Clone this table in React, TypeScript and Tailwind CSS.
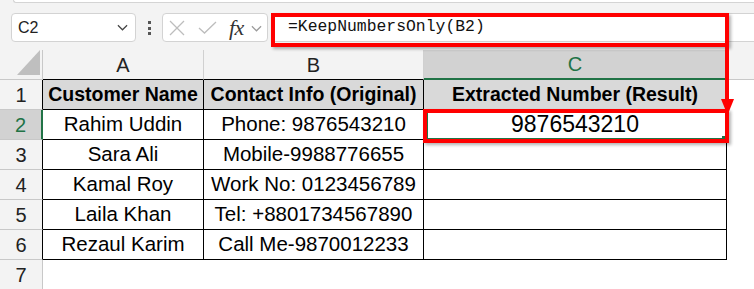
import React from "react";

const names = ["Rahim Uddin", "Sara Ali", "Kamal Roy", "Laila Khan", "Rezaul Karim"];
const contacts = [
  "Phone: 9876543210",
  "Mobile-9988776655",
  "Work No: 0123456789",
  "Tel: +8801734567890",
  "Call Me-9870012233",
];

function Chevron({ className }: { className?: string }) {
  return (
    <svg viewBox="0 0 12 7" className={className} fill="none">
      <polyline points="1,1 6,6 11,1" stroke="currentColor" strokeWidth="1.3" />
    </svg>
  );
}

export default function App() {
  return (
    <div className="relative w-[754px] h-[289px] overflow-hidden bg-white text-black font-['Liberation_Sans',Arial,sans-serif]">
      {/* Formula bar area */}
      <div className="h-[50px] bg-[#f3f3f3] flex flex-col">
        <div className="ml-[13px] h-[3px] bg-white border-b border-l border-[#d4d4d4] rounded-bl-[5px]" />
        <div className="flex items-start mt-[10px]">
          {/* Name box */}
          <div className="ml-[11px] w-[125px] h-[29px] rounded-[4px] border border-[#d3d3d3] bg-white flex items-center justify-between pl-[6px] pr-[7px]">
            <span className="text-[16px] text-[#222] leading-none">C2</span>
            <Chevron className="w-[11px] h-[7px] text-[#444]" />
          </div>
          {/* Dots */}
          <div className="ml-[12px] mt-[8px] flex flex-col gap-[2.5px]">
            <div className="w-[3px] h-[3px] bg-[#555]" />
            <div className="w-[3px] h-[3px] bg-[#555]" />
            <div className="w-[3px] h-[3px] bg-[#555]" />
          </div>
          {/* Buttons */}
          <div className="ml-[11px] w-[106px] h-[29px] rounded-[4px] border border-[#d3d3d3] bg-white flex items-center pl-[6px]">
            <svg viewBox="0 0 16 16" className="w-[16px] h-[16px]" fill="none">
              <line x1="1" y1="1" x2="15" y2="15" stroke="#bdbdbd" strokeWidth="1.3" />
              <line x1="15" y1="1" x2="1" y2="15" stroke="#bdbdbd" strokeWidth="1.3" />
            </svg>
            <svg viewBox="0 0 19 13" className="ml-[13px] w-[19px] h-[13px]" fill="none">
              <polyline points="1,7 6.5,12 18,1" stroke="#bdbdbd" strokeWidth="1.3" />
            </svg>
            <span className="ml-[12px] mt-[1px] text-[22px] leading-none italic text-[#333] font-['Liberation_Serif',serif] tracking-[-0.5px]">
              fx
            </span>
            <Chevron className="ml-[7px] mt-[1px] w-[11px] h-[7px] text-[#9a9a9a]" />
          </div>
          {/* Formula input */}
          <div className="ml-[4px] flex-1 h-[29px] border-y border-l border-[#d3d3d3] rounded-l-[4px] bg-white flex items-center pl-[15px]">
            <span className="text-[16.4px] leading-none text-[#111] font-['Liberation_Mono',monospace]">
              =KeepNumbersOnly(B2)
            </span>
          </div>
        </div>
      </div>

      {/* Column header row */}
      <div className="flex h-[30px] bg-[#f3f3f3]">
        <div className="relative w-[43px] shrink-0 border-r border-b border-[#c8c8c8]">
          <svg viewBox="0 0 24 26" className="absolute right-[2px] bottom-[4px] w-[23px] h-[25px]">
            <polygon points="24,0 24,26 0,26" fill="#bfbfbf" />
          </svg>
        </div>
        <div className="w-[161px] shrink-0 border-r border-[#d0d0d0] border-b border-b-black flex items-center justify-center text-[20px] text-[#222]">
          A
        </div>
        <div className="w-[220px] shrink-0 border-r border-[#d0d0d0] border-b border-b-black flex items-center justify-center text-[20px] text-[#222]">
          B
        </div>
        <div className="w-[303px] shrink-0 bg-[#d2d2d2] border-r border-[#d0d0d0] border-b-2 border-b-[#217346] flex items-center justify-center text-[20px] text-[#217346]">
          C
        </div>
        <div className="flex-1 border-b border-[#c8c8c8]" />
      </div>

      {/* Row 1 */}
      <div className="flex h-[30px]">
        <div className="w-[43px] shrink-0 bg-[#f3f3f3] border-r border-r-black border-b border-b-[#c8c8c8] flex items-center justify-center text-[20px] text-[#222]">
          1
        </div>
        <div className="w-[161px] shrink-0 bg-[#d9d9d9] border-r border-b border-black flex items-center justify-center text-[19.5px] font-bold whitespace-nowrap">
          Customer Name
        </div>
        <div className="w-[220px] shrink-0 bg-[#d9d9d9] border-r border-b border-black flex items-center justify-center text-[19.5px] font-bold whitespace-nowrap">
          Contact Info (Original)
        </div>
        <div className="w-[303px] shrink-0 bg-[#d9d9d9] border-r border-b border-black flex items-center justify-center text-[19.5px] font-bold whitespace-nowrap">
          Extracted Number (Result)
        </div>
        <div className="flex-1" />
      </div>

      {/* Rows 2-6 */}
      {names.map((n, i) => {
        const sel = i === 0;
        return (
          <div key={n} className="flex h-[30px]">
            <div
              className={
                sel
                  ? "w-[43px] shrink-0 bg-[#d2d2d2] border-r-2 border-r-[#217346] border-b border-b-[#c8c8c8] flex items-center justify-center text-[20px] text-[#217346]"
                  : "w-[43px] shrink-0 bg-[#f3f3f3] border-r border-r-black border-b border-b-[#c8c8c8] flex items-center justify-center text-[20px] text-[#222]"
              }
            >
              {i + 2}
            </div>
            <div className="w-[161px] shrink-0 border-r border-b border-black flex items-center justify-center text-[20.5px] whitespace-nowrap">
              {n}
            </div>
            <div className="w-[220px] shrink-0 border-r border-b border-black flex items-center justify-center text-[20.5px] whitespace-nowrap">
              {contacts[i]}
            </div>
            <div className="w-[303px] shrink-0 border-r border-b border-black flex items-center justify-center text-[23px] whitespace-nowrap">
              {sel ? "9876543210" : ""}
            </div>
            <div className="flex-1" />
          </div>
        );
      })}

      {/* Row 7 */}
      <div className="flex h-[29px]">
        <div className="w-[43px] shrink-0 bg-[#f3f3f3] border-r border-[#c8c8c8] flex items-center justify-center text-[20px] text-[#222]">
          7
        </div>
        <div className="flex-1" />
      </div>

      {/* Annotation: formula red box */}
      <div className="absolute left-[271px] top-[13px] w-[458px] h-[34px] border-4 border-[#ff0000] shadow-[2px_2px_3px_rgba(0,0,0,0.3)]" />
      {/* Arrow */}
      <div className="absolute left-[725px] top-[46px] w-[4px] h-[55px] bg-[#ff0000]" />
      <svg viewBox="0 0 13 16" className="absolute left-[721px] top-[99px] w-[13px] h-[16px]">
        <polygon points="0,0 13,0 6.5,16" fill="#ff0000" />
      </svg>
      {/* Result red box with selection */}
      <div className="absolute left-[423px] top-[109px] w-[306px] h-[34px] border-4 border-[#ff0000] shadow-[2px_2px_3px_rgba(0,0,0,0.3)]">
        <div className="absolute inset-0 border-l-[1.5px] border-b-[1.5px] border-[#217346]" />
        <div className="absolute right-0 bottom-0 w-[3px] h-[3px] bg-[#217346]" />
      </div>
    </div>
  );
}
